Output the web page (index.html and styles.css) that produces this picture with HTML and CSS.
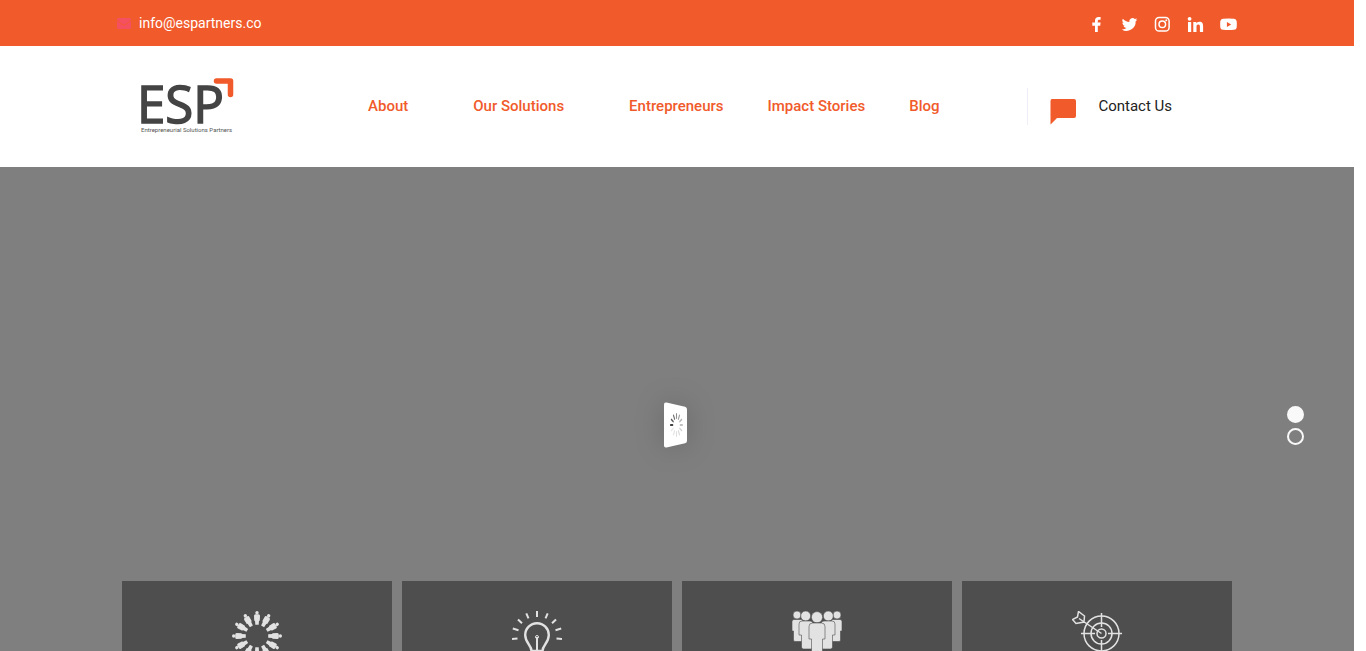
FILE: index.html
```html
<!DOCTYPE html>
<html lang="en">

<head>
    <meta charset="utf-8">
    <meta name="viewport" content="width=device-width, initial-scale=1.0" />
    <title>Entrepreneurial Solutions Partners</title>
    <link rel="stylesheet" href="styles.css">
</head>

<body>
    <div class="top-bar">
        <div class="container top-bar-inner">
            <a class="email" href="mailto:info@espartners.co">
                <svg width="14" height="11" viewBox="0 0 14 11">
                    <path fill="#f5505f" d="M1.300 0h11.400C13.400 0 14 .5 14 1.300v.7L8.300 6.300c-.8.600-1.800.600-2.600 0L0 2v-.7C0 .5.600 0 1.300 0zM0 2.800l5 4c1.200 1 2.800 1 4 0l5-4v6.900c0 .8-.6 1.300-1.300 1.300H1.300C.6 11 0 10.500 0 9.700z" />
                </svg>
                <span>info@espartners.co</span>
            </a>
            <nav class="social" aria-label="Social">
                <a href="#" aria-label="Facebook">
                    <svg viewBox="0 0 17 17"><path d="M7 16V9.700H4.300V6.600H7V4.600C7 2.300 8.400 1 10.500 1c1 0 1.900.1 2.100.1v2.700h-1.400c-1.100 0-1.400.6-1.400 1.300v1.500h2.800l-.4 3.100H9.800V16z" /></svg>
                </a>
                <a href="#" aria-label="Twitter">
                    <svg viewBox="0 0 24 24"><path d="M23 5.100c-.8.400-1.700.6-2.600.7.900-.6 1.600-1.400 2-2.500-.9.500-1.900.9-2.900 1.100A4.500 4.500 0 0 0 11.800 8.500C8.100 8.300 4.800 6.500 2.600 3.800a4.500 4.500 0 0 0 1.400 6c-.7 0-1.400-.2-2-.5v.1c0 2.200 1.500 4 3.600 4.400-.7.200-1.400.2-2 .1.600 1.800 2.200 3.100 4.200 3.100A9.100 9.100 0 0 1 1 18.900a12.800 12.800 0 0 0 19.700-11.400c.9-.7 1.700-1.500 2.300-2.400z" /></svg>
                </a>
                <a href="#" aria-label="Instagram">
                    <svg viewBox="0 0 17 17" class="line">
                        <rect x="1.500" y="1.500" width="13.600" height="13.600" rx="3.600" />
                        <circle cx="8.300" cy="8.300" r="3.300" />
                        <circle class="dot" cx="12.300" cy="4.300" r="1" />
                    </svg>
                </a>
                <a href="#" aria-label="LinkedIn">
                    <svg viewBox="0 0 17 17"><path d="M1 6h3.200v10H1zM6.300 6h3v1.400c.5-.9 1.600-1.700 3.100-1.700 3.100 0 3.700 2.100 3.700 4.700V16h-3.200v-5c0-1.200 0-2.600-1.600-2.600s-1.800 1.200-1.800 2.500V16H6.300z" /><circle cx="2.600" cy="2.800" r="1.900" /></svg>
                </a>
                <a href="#" aria-label="YouTube">
                    <svg viewBox="0 0 17 17"><path fill-rule="evenodd" d="M3 2.800q5.500-.5 11 0 2.400.2 2.700 2.400.3 3.300 0 6.200-.3 2.200-2.700 2.400-5.500.5-11 0Q.6 13.600.3 11.400q-.3-2.900 0-6.200Q.6 3 3 2.800zm3.900 3.100v5l4.300-2.500z" /></svg>
                </a>
            </nav>
        </div>
    </div>

    <header class="header">
        <div class="container header-inner">
            <a class="logo" href="#">
                <svg width="100" height="58" viewBox="-6 0 100 58" role="img" aria-label="ESP">
                    <text class="logo-name" x="-4" y="45">ESP</text>
                    <path d="M75.500 3H89.500V16.500" fill="none" stroke="#f15a2b" stroke-width="5.500" stroke-linecap="round" stroke-linejoin="round" />
                    <text class="logo-tag" x="0" y="54">Entrepreneurial Solutions Partners</text>
                </svg>
            </a>
            <nav class="menu" aria-label="Main">
                <a class="has-sub" href="#">About</a>
                <a class="has-sub" href="#">Our Solutions</a>
                <a href="#">Entrepreneurs</a>
                <a href="#">Impact Stories</a>
                <a href="#">Blog</a>
            </nav>
            <a class="contact" href="#">
                <svg width="26" height="26" viewBox="0 0 26 26"><path fill="#f15a2b" d="M2 0h22q2 0 2 2v15q0 2-2 2H7L.500 25.500V2Q.500 0 2 0z" /></svg>
                <span>Contact Us</span>
            </a>
        </div>
    </header>

    <main class="hero">
        <div class="loader">
            <svg width="120" height="120" viewBox="0 0 120 120">
                <path class="card" d="M50.500 37.500L69 41.800Q71 42.300 71 44.300V75.700Q71 77.700 69 78.200L50.500 82.500Q48 83 48 80.500V39.500Q48 37 50.500 37.500z" />
                <g transform="translate(60.500 60) scale(.54 1)" stroke="#222" stroke-width="2" stroke-linecap="round">
                    <path d="M-7 0H-11" opacity=".85" />
                    <path d="M-7 0H-11" opacity=".75" transform="rotate(30)" />
                    <path d="M-7 0H-11" opacity=".65" transform="rotate(60)" />
                    <path d="M-7 0H-11" opacity=".5" transform="rotate(90)" />
                    <path d="M-7 0H-11" opacity=".42" transform="rotate(120)" />
                    <path d="M-7 0H-11" opacity=".34" transform="rotate(150)" />
                    <path d="M-7 0H-11" opacity=".28" transform="rotate(180)" />
                    <path d="M-7 0H-11" opacity=".2" transform="rotate(210)" />
                    <path d="M-7 0H-11" opacity=".16" transform="rotate(240)" />
                    <path d="M-7 0H-11" opacity=".14" transform="rotate(270)" />
                    <path d="M-7 0H-11" opacity=".12" transform="rotate(300)" />
                    <path d="M-7 0H-11" opacity=".1" transform="rotate(330)" />
                </g>
            </svg>
        </div>

        <div class="bullets">
            <button class="bullet active" type="button" aria-label="Slide 1"></button>
            <button class="bullet" type="button" aria-label="Slide 2"></button>
        </div>

        <div class="services">
            <a class="service" href="#" aria-label="Community">
                <svg viewBox="0 0 50 50">
                    <defs>
                        <g id="man">
                            <circle cx="25" cy="1.700" r="1.700" />
                            <path d="M23.500 3.200h3q1.500 0 1.500 1.500l-.2 5H27L26.700 13.800h-3.400L23 9.700H22.200L22 4.700q0-1.500 1.500-1.500z" />
                        </g>
                    </defs>
                    <use href="#man" />
                    <use href="#man" transform="rotate(30 25 25)" />
                    <use href="#man" transform="rotate(60 25 25)" />
                    <use href="#man" transform="rotate(90 25 25)" />
                    <use href="#man" transform="rotate(120 25 25)" />
                    <use href="#man" transform="rotate(150 25 25)" />
                    <use href="#man" transform="rotate(180 25 25)" />
                    <use href="#man" transform="rotate(210 25 25)" />
                    <use href="#man" transform="rotate(240 25 25)" />
                    <use href="#man" transform="rotate(270 25 25)" />
                    <use href="#man" transform="rotate(300 25 25)" />
                    <use href="#man" transform="rotate(330 25 25)" />
                </svg>
            </a>
            <a class="service" href="#" aria-label="Ideas">
                <svg viewBox="0 0 50 50" class="stroke">
                    <path stroke-width="2.400" d="M19.500 40C19.500 34 13.200 32 13.200 24a11.800 11.800 0 0 1 23.600 0C36.800 32 30.500 34 30.500 40z" />
                    <path stroke-width="2" d="M25 0v6M14.300 2.300l2.200 5M35.700 2.300l-2.200 5M6 8.500l4 3.800M44 8.500l-4 3.800M.8 17.500l5.700 1.700M49.200 17.500l-5.700 1.700M0 28l5.500-.5M50 28l-5.500-.5M25 26v14" />
                    <circle cx="25" cy="26" r="1.500" />
                </svg>
            </a>
            <a class="service" href="#" aria-label="Team">
                <svg viewBox="0 0 50 50">
                    <g class="outlined">
                        <circle cx="5" cy="4" r="4" />
                        <path d="M2 8.500h7q2 0 2 2V29q0 1.500-1.500 1.500H3Q1.500 30.500 1.500 29V20H0V10.500Q0 8.500 2 8.500z" />
                        <circle cx="45" cy="4" r="4" />
                        <path d="M48 8.500h-7q-2 0-2 2V29q0 1.500 1.500 1.500H47q1.500 0 1.500-1.500V20H50V10.500q0-2-2-2z" />
                        <circle cx="13.700" cy="5" r="5" />
                        <path d="M10 10h8q3 0 3 3V36q0 2-2 2h-7.500q-2 0-2-2V24H7V13q0-3 3-3z" />
                        <circle cx="36.300" cy="5" r="5" />
                        <path d="M40 10h-8q-3 0-3 3V36q0 2 2 2h7.500q2 0 2-2V24H43V13q0-3-3-3z" />
                        <circle cx="25" cy="6.200" r="5.600" />
                        <path d="M20.500 12h9q3.500 0 3.500 3.500V28h-2.500V50h-11V28H17V15.500q0-3.500 3.500-3.500z" />
                    </g>
                </svg>
            </a>
            <a class="service" href="#" aria-label="Goals">
                <svg viewBox="0 0 50 50" class="stroke">
                    <g stroke-width="1.500">
                        <circle cx="29.500" cy="22.500" r="17.500" />
                        <circle cx="29.500" cy="22.500" r="10.500" />
                        <circle cx="29.500" cy="22.500" r="4.500" />
                        <path d="M29.500 2v14M29.500 29v14M9 22.500h14M36 22.500h14M29.500 22.500L7 7.500M12 11L12.500 5 6.500.5 5.500 6 .5 8.500 4 12.500z" />
                    </g>
                </svg>
            </a>
        </div>
    </main>
</body>

</html>
```
FILE: styles.css
```css
* {
    box-sizing: border-box;
}

html {
    background-color: #fff;
}

body {
    display: flex;
    flex-direction: column;
    height: 100vh;
    margin: 0 12px 0 0;
    overflow: hidden;
    font-family: Roboto, "Liberation Sans", sans-serif;
    font-size: 15px;
    line-height: 20px;
}

a {
    color: inherit;
    text-decoration: none;
}

svg {
    display: block;
}

.container {
    width: 100%;
    max-width: 1120px;
    margin: 0 auto;
}

/* top bar */
.top-bar {
    background-color: #f15a2b;
    color: #fff;
}

.top-bar-inner {
    display: flex;
    align-items: center;
    justify-content: space-between;
    height: 46px;
}

.email {
    display: flex;
    align-items: center;
    gap: 8px;
    font-size: 14px;
}

.social {
    display: flex;
    gap: 16px;
    padding-top: 2px;
}

.social svg {
    width: 17px;
    height: 17px;
    fill: #fff;
}

.social .line {
    fill: none;
    stroke: #fff;
    stroke-width: 1.5;
}

.social .dot {
    fill: #fff;
    stroke: none;
}

/* header */
.header-inner {
    display: flex;
    align-items: center;
    height: 121px;
    padding: 0 65px 0 18px;
}

.logo svg {
    overflow: visible;
}

.logo-name {
    font-family: "Open Sans", sans-serif;
    font-size: 51px;
    font-weight: 500;
    fill: #444;
    stroke: #444;
    stroke-width: 1.5;
}

.logo-tag {
    font-size: 6px;
    fill: #555;
}

.menu {
    display: flex;
    margin-left: 133px;
    padding-bottom: 2px;
    gap: 44px;
    font-weight: 500;
    color: #f15a2b;
    white-space: nowrap;
}

.menu .has-sub {
    padding-right: 21px;
}

.contact {
    display: flex;
    gap: 22px;
    height: 37px;
    margin-left: auto;
    padding-left: 22px;
    border-left: 1px solid #eeeef8;
    color: #222;
    line-height: 36px;
    white-space: nowrap;
}

.contact svg {
    margin-top: 11px;
}

/* hero */
.hero {
    position: relative;
    display: flex;
    flex: 1;
    flex-direction: column;
    justify-content: flex-end;
    background-color: #7f7f7f;
}

.loader {
    position: absolute;
    top: 198px;
    left: 50%;
    margin-left: -61px;
}

.loader .card {
    fill: #fff;
    filter: drop-shadow(0 0 14px rgba(0, 0, 0, 0.18));
}

.bullets {
    position: absolute;
    top: 239px;
    right: 50px;
    display: grid;
    gap: 5px;
}

.bullet {
    width: 17px;
    height: 17px;
    padding: 0;
    border: 2px solid #f9f9f9;
    border-radius: 50%;
    background: none;
    cursor: pointer;
}

.bullet.active {
    background-color: #f9f9f9;
}

.services {
    display: grid;
    grid-template-columns: repeat(4, 1fr);
    gap: 10px;
    width: 100%;
    max-width: 1110px;
    height: 70px;
    margin: 0 auto;
}

.service {
    padding-top: 30px;
    background-color: #4e4e4e;
    overflow: hidden;
}

.service svg {
    width: 50px;
    height: 50px;
    margin: 0 auto;
    fill: #e2e2e2;
}

.service .stroke {
    fill: none;
    stroke: #e2e2e2;
}

.service .outlined {
    stroke: #4e4e4e;
    stroke-width: 0.6;
}
```
